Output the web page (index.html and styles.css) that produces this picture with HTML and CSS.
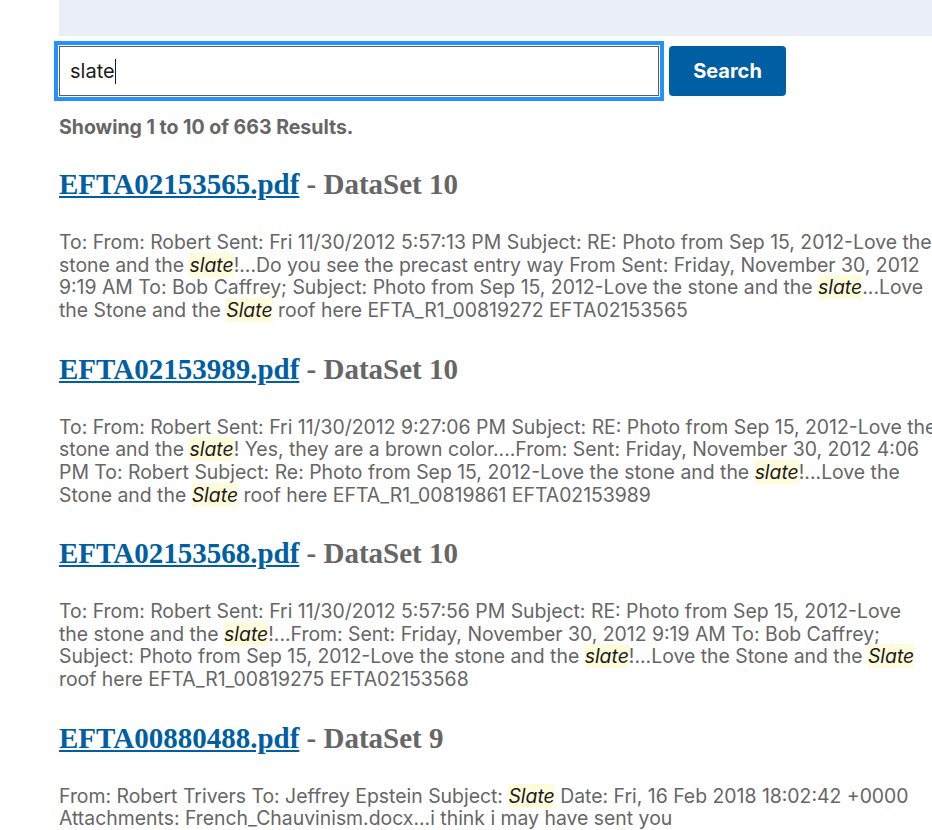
FILE: index.html
```html
<!DOCTYPE html>
<html lang="en">
<head>
  <meta charset="UTF-8" />
  <meta name="viewport" content="width=device-width, initial-scale=1.0" />
  <title>Search</title>
  <link rel="stylesheet" href="styles.css">
</head>
<body>
  <div class="page">
    <div class="banner"></div>

    <form class="search-form" onsubmit="return false">
      <div class="search-box"><span class="query">slate</span><span class="caret"></span></div>
      <button type="submit" class="search-btn">Search</button>
    </form>

    <p class="count">Showing 1 to 10 of 663 Results.</p>

    <div class="result">
      <h2><a href="#">EFTA02153565.pdf</a> - DataSet 10</h2>
      <p>To: From: Robert Sent: Fri 11/30/2012 5:57:13 PM Subject: RE: Photo from Sep 15, 2012-Love the stone and the <mark>slate</mark>!...Do you see the precast entry way From Sent: Friday, November 30, 2012 9:19 AM To: Bob Caffrey; Subject: Photo from Sep 15, 2012-Love the stone and the <mark>slate</mark>...Love the Stone and the <mark>Slate</mark> roof here EFTA_R1_00819272 EFTA02153565</p>
    </div>

    <div class="result">
      <h2><a href="#">EFTA02153989.pdf</a> - DataSet 10</h2>
      <p>To: From: Robert Sent: Fri 11/30/2012 9:27:06 PM Subject: RE: Photo from Sep 15, 2012-Love the stone and the <mark>slate</mark>! Yes, they are a brown color....From: Sent: Friday, November 30, 2012 4:06 PM To: Robert Subject: Re: Photo from Sep 15, 2012-Love the stone and the <mark>slate</mark>!...Love the Stone and the <mark>Slate</mark> roof here EFTA_R1_00819861 EFTA02153989</p>
    </div>

    <div class="result">
      <h2><a href="#">EFTA02153568.pdf</a> - DataSet 10</h2>
      <p>To: From: Robert Sent: Fri 11/30/2012 5:57:56 PM Subject: RE: Photo from Sep 15, 2012-Love <span class="nw">the stone</span> and the <mark>slate</mark>!...From: Sent: Friday, November 30, 2012 9:19 AM To: Bob Caffrey; Subject: Photo from Sep 15, 2012-Love the stone and the <mark>slate</mark>!...Love the Stone and the <mark>Slate</mark> roof here EFTA_R1_00819275 EFTA02153568</p>
    </div>

    <div class="result">
      <h2><a href="#">EFTA00880488.pdf</a> - DataSet 9</h2>
      <p>From: Robert Trivers To: Jeffrey Epstein Subject: <mark>Slate</mark> Date: Fri, 16 Feb 2018 18:02:42 +0000 Attachments: French_Chauvinism.docx...i think i may have sent you</p>
    </div>
  </div>
</body>
</html>
```

FILE: styles.css
```css
html, body {
  margin: 0;
  overflow: hidden;
}
body {
  font-family: Inter, "Liberation Sans", sans-serif;
  color: #666;
}
.page {
  margin-left: 59px;
  width: 878px;
}
.banner {
  height: 36px;
  background-color: #eaeff7;
}
.search-form {
  display: flex;
  gap: 10px;
  margin-top: 10px;
}
.search-box {
  box-sizing: border-box;
  width: 600px;
  height: 50px;
  border: 1px solid #565c65;
  outline: 4px solid #2491ff;
  outline-offset: 1px;
  display: flex;
  align-items: center;
  padding-left: 10px;
  font-size: 20px;
  color: #1b1b1b;
}
.caret {
  width: 1px;
  height: 25px;
  background: #1b1b1b;
}
.search-btn {
  width: 117px;
  height: 50px;
  border: 0;
  border-radius: 4px;
  background-color: #005ea2;
  color: #fff;
  font-family: Inter, "Liberation Sans", sans-serif;
  font-weight: bold;
  font-size: 20px;
}
.count {
  margin: 20px 0 30px;
  font-size: 19.5px;
  font-weight: bold;
  line-height: 22px;
}
.result h2 {
  margin: 0 0 30px;
  font-family: "Liberation Serif", serif;
  font-size: 29px;
  line-height: 33px;
  color: #666;
}
.result h2 a {
  color: #005ea2;
}
.result p {
  margin: 0 0 30.7px;
  font-size: 19.4px;
  line-height: 22.7px;
}
.nw {
  white-space: nowrap;
}
mark {
  background-color: #fffcdc;
  color: #1b1b1b;
  font-style: italic;
}
```
